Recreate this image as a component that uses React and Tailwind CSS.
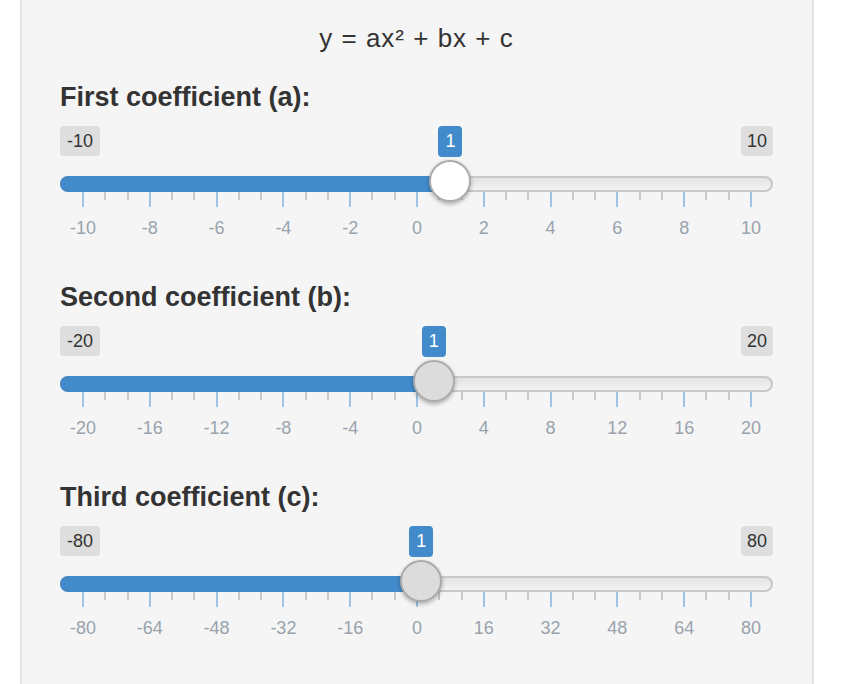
import React from 'react';

// grid geometry inside the slider (px, relative to the slider's left edge)
const GRID_X = 23;
const GRID_W = 668;
const SUB_TICKS = 30;

const sliders = [
  { label: 'First coefficient (a):', min: -10, max: 10, value: 1, active: true },
  { label: 'Second coefficient (b):', min: -20, max: 20, value: 1 },
  { label: 'Third coefficient (c):', min: -80, max: 80, value: 1 },
];

function RangeSlider({ min, max, value, active }) {
  const handleX = GRID_X + ((value - min) / (max - min)) * GRID_W;
  const ticks = Array.from({ length: SUB_TICKS + 1 }, (_, k) => k);
  const gridValues = Array.from({ length: 11 }, (_, i) => min + (i * (max - min)) / 10);

  return (
    <div className="relative flex h-[156px] flex-col">
      {/* min / max labels */}
      <div className="flex justify-between">
        <span className="h-[30px] rounded-[4px] bg-[#dedede] px-[7px] text-[18px] leading-[30px] text-[#333]">
          {min}
        </span>
        <span className="h-[30px] rounded-[4px] bg-[#dedede] px-[6px] text-[18px] leading-[30px] text-[#333]">
          {max}
        </span>
      </div>

      {/* track with fill */}
      <div className="mt-[20px] h-[16px] rounded-full border-2 border-[#c9c9c9] bg-linear-to-b from-[#e3e3e3] to-[#f3f3f3]">
        <div
          className="-m-[2px] h-[16px] rounded-l-full bg-[#428bca]"
          style={{ width: handleX }}
        />
      </div>

      {/* grid ticks */}
      <div className="flex items-start justify-between pl-[22px] pr-[21px]">
        {ticks.map((k) => (
          <div
            key={k}
            className={
              k % 3 === 0 ? 'h-[15px] w-[2px] bg-[#9dc3e4]' : 'h-[8px] w-[2px] bg-[#c9c9c9]'
            }
          />
        ))}
      </div>

      {/* grid text */}
      <div className="mt-[12px] flex justify-between pl-[3px] pr-[2px]">
        {gridValues.map((v) => (
          <span key={v} className="w-[40px] text-center text-[18px] leading-[18px] text-[#99a3ac]">
            {v}
          </span>
        ))}
      </div>

      {/* current value bubble */}
      <span
        className="absolute top-0 h-[31px] -translate-x-1/2 rounded-[4px] bg-[#428bca] px-[7px] text-[18px] leading-[31px] text-white"
        style={{ left: handleX }}
      >
        {value}
      </span>

      {/* handle */}
      <div
        className={`absolute top-[34px] h-[42px] w-[42px] -translate-x-1/2 rounded-full border-2 border-[#ababab] shadow-[0_2px_4px_rgba(0,0,0,0.3)] ${
          active ? 'bg-white' : 'bg-[#dcdcdc]'
        }`}
        style={{ left: handleX }}
      />
    </div>
  );
}

export default function App() {
  return (
    <div className="min-h-screen bg-white font-['Liberation_Sans',Arial,sans-serif] text-[#333]">
      <div className="ml-[20px] h-[684px] w-[794px] border-x-2 border-[#e3e3e3] bg-[#f5f5f5] pl-[38px] pr-[39px] pt-[23px]">
        <h4 className="text-center text-[26px] leading-[30px] tracking-[1px]">y = ax² + bx + c</h4>

        <div className="mt-[29px] flex flex-col">
          {sliders.map((s) => (
            <div key={s.label} className="flex flex-col gap-[14px]">
              <label className="text-[27px] font-bold leading-[30px]">{s.label}</label>
              <RangeSlider {...s} />
            </div>
          ))}
        </div>
      </div>
    </div>
  );
}
